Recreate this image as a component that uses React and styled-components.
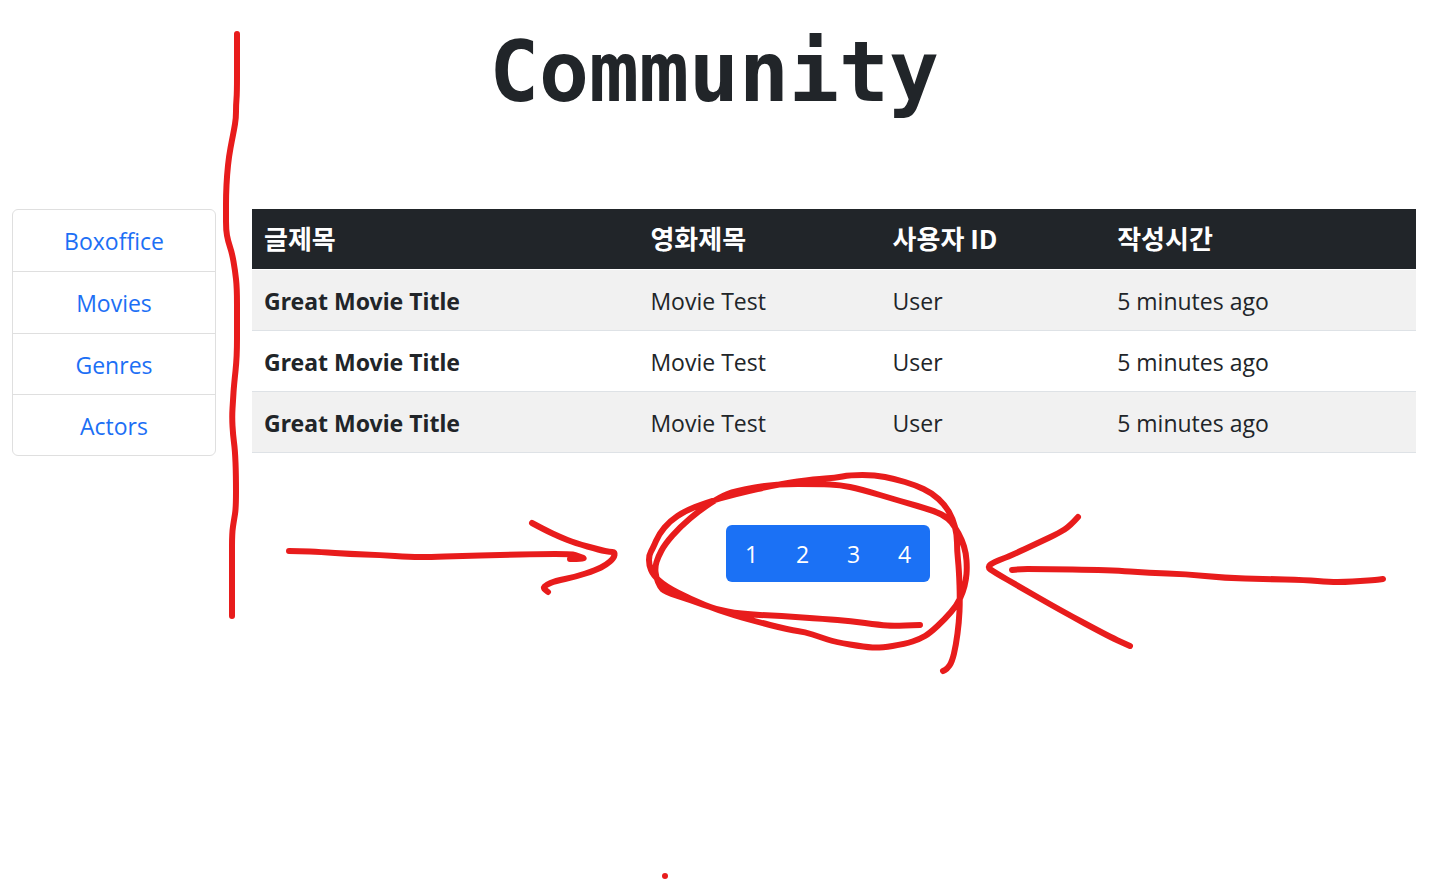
import React from "react";
import styled, { createGlobalStyle } from "styled-components";

const GlobalStyle = createGlobalStyle`
  *, *::before, *::after { box-sizing: border-box; }
  body {
    margin: 0;
    background: #fff;
    color: #212529;
    font-family: "Open Sans", "Noto Sans", "Noto Sans CJK KR", sans-serif;
    font-size: 23px;
    font-weight: 400;
    line-height: 36px;
  }
`;

const Page = styled.div`
  position: relative;
  min-height: 100vh;
  padding: 0 21px 0 12px;
`;

const Title = styled.h1`
  margin: 0;
  padding: 25px 0 88px;
  font-family: "DejaVu Sans Mono", monospace;
  font-size: 83px;
  font-weight: 700;
  line-height: 96px;
  text-align: center;
`;

const Columns = styled.div`
  display: grid;
  grid-template-columns: 204px 1fr;
  gap: 24px;
  align-items: start;
`;

const Menu = styled.ul`
  display: grid;
  grid-auto-rows: 1fr;
  min-height: 247px;
  margin: 0;
  padding: 0;
  list-style: none;
  border: 1px solid #dfdfdf;
  border-radius: 6px;
`;

const MenuItem = styled.li`
  display: grid;
  & + & { border-top: 1px solid #dfdfdf; }
`;

const MenuLink = styled.a`
  padding: 13px 24px 11px;
  color: #1c6ff5;
  text-align: center;
  text-decoration: none;
`;

const Main = styled.main`
  display: flex;
  flex-direction: column;
  align-items: center;
  gap: 72px;
`;

const TableArea = styled.div`
  width: 100%;
  padding-left: 12px;
`;

const Table = styled.table`
  width: 100%;
  table-layout: fixed;
  border-spacing: 0;
  text-align: left;
`;

const Column = styled.col`
  width: ${(p) => p.$share};
`;

const HeadCell = styled.th`
  height: 61px;
  padding: 11px 12px 13px;
  background: #212529;
  background-clip: padding-box;
  border-bottom: 1px solid #fff;
  color: #fff;
  font-family: "Noto Sans CJK KR", sans-serif;
  font-size: 26px;
  font-weight: 700;
`;

const Row = styled.tr`
  &:nth-child(odd) { background: #f1f1f1; }
`;

const cell = `
  height: 61px;
  padding: 13px 12px 11px;
  border-bottom: 1px solid #dee2e6;
`;

const RowHead = styled.th`
  ${cell}
  font-family: "Noto Sans", "Noto Sans CJK KR", sans-serif;
  font-weight: 700;
`;

const Cell = styled.td`
  ${cell}
`;

const Pager = styled.nav`
  display: flex;
  overflow: hidden;
  border-radius: 6px;
`;

const PageButton = styled.button`
  width: 51px;
  padding: 11px 0 10px;
  border: 0;
  background: #1b71f5;
  color: #fff;
  font: inherit;
  cursor: pointer;
`;

const Ink = styled.svg`
  position: absolute;
  top: 0;
  left: 0;
  width: 100%;
  pointer-events: none;
  fill: none;
  stroke: #e81c1c;
  stroke-width: 6;
  stroke-linecap: round;
  stroke-linejoin: round;
`;

const links = ["Boxoffice", "Movies", "Genres", "Actors"];
const posts = [1, 2, 3].map((id) => ({
  id,
  title: "Great Movie Title",
  movie: "Movie Test",
  user: "User",
  time: "5 minutes ago",
}));

const strokes = [
  // Divider beside the menu
  "237,34 237,60 237,93 236,105 236,118 234,130 232,140 229,156 227,175 226,195 226,213 226,230 228,241 232,253 235,270 237,288 237,320 237,357 234,385 233,400 232,417 233,435 235,450 236,475 236,508 234,520 232,533 232,560 232,616",
  // Arrow pointing right
  "289,551 300,551 320,552 350,554 380,555 410,557 430,557 460,556 500,555 540,554 570,554 575,555 584,558 583,559 570,559",
  "532,523 545,530 560,537 575,543 600,550 610,552 615,552 614,558 606,565 596,570 575,577 555,581 546,585 543,588 548,592",
  // Arrow pointing left
  "1012,570 1020,569 1035,569 1110,570 1150,573 1185,574 1225,578 1265,579 1305,580 1330,582 1345,582 1360,581 1376,580 1383,579",
  "1078,517 1070,526 1059,533 1040,542 1010,556 994,562 987,567 994,572 1020,587 1060,610 1110,637 1130,646",
  // Double loop round the pager
  "920,625 895,626 880,625 850,621 825,619 780,616 740,614 715,609 690,600 665,592 660,587 656,577 655,567 658,557 665,544 680,527 700,510 720,497 735,491 775,484 820,484 840,485 860,489 900,501 935,511 948,518 955,527 962,540 966,553 967,568 966,580 963,592 957,605 945,619 930,633 920,639 905,644 880,648 865,647 835,642 820,637 805,632 790,630 750,620 720,611 690,599 665,586 653,575 649,565 649,555 653,548 659,534 670,521 685,511 705,503 735,494 780,484 815,479 835,478 850,475 875,475 895,479 915,485 932,493 945,505 953,519 957,535 957,550 959,570 960,600 959,622 956,645 952,662 947,669 943,671",
];

// Rounds a list of points into one curve that passes through their midpoints.
function smooth(list) {
  const pts = list.split(" ").map((p) => p.split(",").map(Number));
  let d = `M${pts[0]}`;
  for (let i = 1; i < pts.length - 1; i += 1) {
    const [x, y] = pts[i];
    const [nx, ny] = pts[i + 1];
    d += ` Q${x},${y} ${(x + nx) / 2},${(y + ny) / 2}`;
  }
  return `${d} L${pts[pts.length - 1]}`;
}

export default function App() {
  return (
    <Page>
      <GlobalStyle />
      <Title>Community</Title>
      <Columns>
        <nav aria-label="Sections">
          <Menu>
            {links.map((name) => (
              <MenuItem key={name}>
                <MenuLink href={`#${name.toLowerCase()}`}>{name}</MenuLink>
              </MenuItem>
            ))}
          </Menu>
        </nav>
        <Main>
          <TableArea>
            <Table>
              <colgroup>
                <Column $share="33.2%" />
                <Column $share="20.8%" />
                <Column $share="19.3%" />
                <Column $share="auto" />
              </colgroup>
              <thead>
                <tr>
                  <HeadCell scope="col">글제목</HeadCell>
                  <HeadCell scope="col">영화제목</HeadCell>
                  <HeadCell scope="col">사용자 ID</HeadCell>
                  <HeadCell scope="col">작성시간</HeadCell>
                </tr>
              </thead>
              <tbody>
                {posts.map((post) => (
                  <Row key={post.id}>
                    <RowHead scope="row">{post.title}</RowHead>
                    <Cell>{post.movie}</Cell>
                    <Cell>{post.user}</Cell>
                    <Cell>{post.time}</Cell>
                  </Row>
                ))}
              </tbody>
            </Table>
          </TableArea>
          <Pager aria-label="Pages">
            {[1, 2, 3, 4].map((n) => (
              <PageButton type="button" key={n}>{n}</PageButton>
            ))}
          </Pager>
        </Main>
      </Columns>
      <Ink viewBox="0 0 1437 880" aria-hidden="true">
        {strokes.map((points) => (
          <path key={points} d={smooth(points)} />
        ))}
        <circle cx="665" cy="876" r="3" fill="#e81c1c" stroke="none" />
      </Ink>
    </Page>
  );
}
